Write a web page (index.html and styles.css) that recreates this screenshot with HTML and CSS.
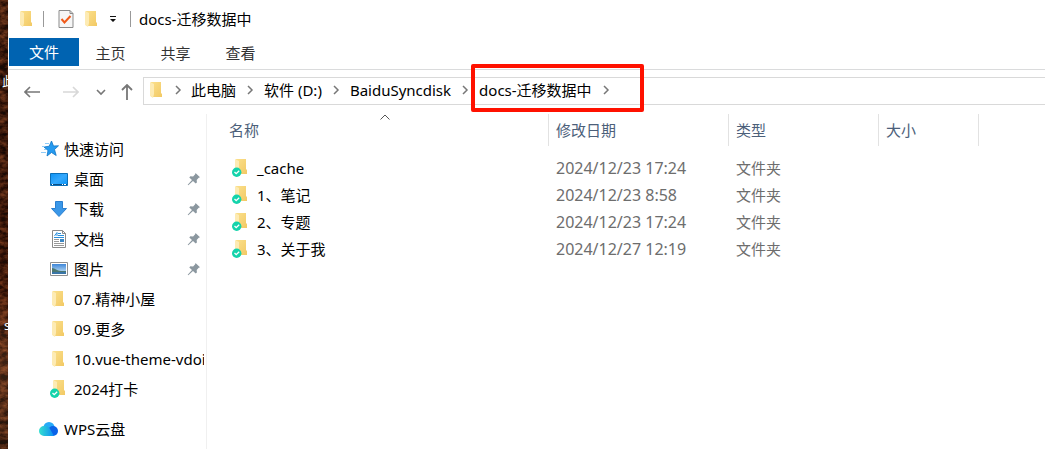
FILE: index.html
```html
<!DOCTYPE html>
<html lang="zh-CN">
<head>
  <meta charset="UTF-8" /><meta name="viewport" content="width=device-width, initial-scale=1"/>
  <title>docs-迁移数据中</title>
  <link rel="stylesheet" href="styles.css">
</head>
<body>
  <!-- Shared icons -->
  <svg class="sprite" aria-hidden="true">
    <defs>
      <linearGradient id="gFolder" x1="0" y1="0" x2="1" y2="1"><stop offset="0" stop-color="#fbe08c"/><stop offset="1" stop-color="#f2c964"/></linearGradient>
      <linearGradient id="gDesk" x1="0" y1="0" x2="1" y2="1"><stop offset="0" stop-color="#0d93f5"/><stop offset=".5" stop-color="#35a8fc"/><stop offset="1" stop-color="#0a95f8"/></linearGradient>
      <linearGradient id="gSky" x1="0" y1="0" x2="0" y2="1"><stop offset="0" stop-color="#3e86d8"/><stop offset="1" stop-color="#d3ecf8"/></linearGradient>
      <linearGradient id="gCloud" x1="0" y1="0" x2="1" y2="0"><stop offset="0" stop-color="#35e0cf"/><stop offset="1" stop-color="#0d8bf5"/></linearGradient>
    </defs>
    <symbol id="folder" viewBox="0 0 16 18">
      <path d="M3 1h10v11l1 1v3H3z" fill="url(#gFolder)"/>
      <path d="M2 1l4 2v10l-1 4-3-2z" fill="#fdebb4"/>
    </symbol>
    <symbol id="synced" viewBox="0 0 16 18">
      <path d="M4 0h10v10l1 1v4H4z" fill="url(#gFolder)"/>
      <path d="M3 0l4 2v12H3z" fill="#fdebb4"/>
      <circle cx="4.700" cy="13.200" r="4.700" fill="#14d3ab"/>
      <path d="M2.500 13l1.700 1.700 3-3" fill="none" stroke="#fff" stroke-width="1.300"/>
    </symbol>
    <symbol id="pin" viewBox="0 0 14 14">
      <path d="M8.500 1L13 5.300l-1.300.4-2 2.300.2 2.500-1.200 1L6 9 1.300 13.300.700 12.800 5 8 2.300 5.400l1-1.100 2.800.1L8.200 2.300z" fill="#8b979f"/>
    </symbol>
    <symbol id="chev" viewBox="0 0 8 10"><path d="M2 1l4 4-4 4" fill="none" stroke="#777" stroke-width="1.500"/></symbol>
  </svg>

  <aside class="desktop">
    <svg class="wallpaper" aria-hidden="true">
      <filter id="grain" x="0" y="0" width="100%" height="100%" color-interpolation-filters="sRGB">
        <feTurbulence type="fractalNoise" baseFrequency=".12 .2" numOctaves="4" seed="7"/>
        <feColorMatrix values="1.200 0 0 0 -.34  .7 0 0 0 -.24  .4 0 0 0 -.15  0 0 0 0 .6"/>
      </filter>
      <rect width="100%" height="100%" filter="url(#grain)"/>
    </svg>
    <span class="label label-pc">此</span>
    <span class="label label-s">s</span>
  </aside>

  <div class="window">
    <header class="titlebar">
      <svg class="folder"><use href="#folder"/></svg>
      <span class="sep"></span>
      <button class="tool" aria-label="属性">
        <svg width="16" height="18" viewBox="0 0 16 18"><path d="M1 .5h11l3 3v14H1z" fill="#f6f6f6" stroke="#8b8b8b"/><path d="M12 .5v3h3" fill="none" stroke="#8b8b8b"/><path d="M3.500 9l3 3.500 6-6.500" fill="none" stroke="#f05a1a" stroke-width="2"/></svg>
      </button>
      <button class="tool" aria-label="新建文件夹"><svg class="folder"><use href="#folder"/></svg></button>
      <button class="tool more" aria-label="自定义快速访问工具栏">
        <svg width="8" height="6" viewBox="0 0 8 6"><path d="M1 0h6v1H1zM1 3h6L4 6z" fill="#111"/></svg>
      </button>
      <span class="sep"></span>
      <h1>docs-迁移数据中</h1>
    </header>

    <nav class="tabs">
      <button class="active">文件</button>
      <button>主页</button>
      <button>共享</button>
      <button>查看</button>
    </nav>

    <div class="address">
      <div class="arrows">
        <button aria-label="后退"><svg width="16" height="12" viewBox="0 0 16 12"><path d="M6 1L1 6l5 5M1 6h15" fill="none" stroke="#777" stroke-width="1.600"/></svg></button>
        <button aria-label="前进"><svg width="16" height="12" viewBox="0 0 16 12"><path d="M10 1l5 5-5 5M15 6H0" fill="none" stroke="#d8d8d8" stroke-width="1.600"/></svg></button>
        <button aria-label="最近"><svg width="10" height="8" viewBox="0 0 10 8"><path d="M1 2l4 4 4-4" fill="none" stroke="#777" stroke-width="1.600"/></svg></button>
        <button aria-label="上移"><svg width="12" height="16" viewBox="0 0 12 16"><path d="M1 6l5-5 5 5M6 1v15" fill="none" stroke="#777" stroke-width="1.800"/></svg></button>
      </div>
      <div class="path">
        <svg class="folder"><use href="#folder"/></svg>
        <svg class="chev"><use href="#chev"/></svg>
        <a href="#">此电脑</a>
        <svg class="chev"><use href="#chev"/></svg>
        <a href="#">软件 (D:)</a>
        <svg class="chev"><use href="#chev"/></svg>
        <a href="#">BaiduSyncdisk</a>
        <svg class="chev"><use href="#chev"/></svg>
        <div class="current">
          <a href="#">docs-迁移数据中</a>
          <svg class="chev"><use href="#chev"/></svg>
        </div>
      </div>
    </div>

    <div class="content">
      <nav class="sidebar">
        <a class="root" href="#">
          <svg width="18" height="18" viewBox="0 0 18 18"><path d="M10.500 1l2 5 5-.2-4 3.700 1.700 6-4.700-3L6 16l1-5.500L3 7l5.200-.8z" fill="#259af0" stroke="#1276c4" stroke-width=".8"/><path d="M4 3.500h4M1 6.500h3M3 9.500h2M0 12.500h5" stroke="#8fcbf7"/></svg>
          快速访问
        </a>
        <a href="#">
          <svg width="18" height="18" viewBox="0 0 18 18"><path d="M.5 3.500h17v12H.5z" fill="url(#gDesk)" stroke="#0b6fb8"/><path d="M1 14.500h16" stroke="#0a4f86"/><path d="M2 14.500h1M12 14.500h1M14 14.500h2" stroke="#fff"/></svg>
          <span>桌面</span><svg class="pin"><use href="#pin"/></svg>
        </a>
        <a href="#">
          <svg width="18" height="18" viewBox="0 0 18 18"><path d="M5.500 1.500h7v7h4L9 16.500 1.500 8.500h4z" fill="#3a97e8" stroke="#2a7fd0"/></svg>
          <span>下载</span><svg class="pin"><use href="#pin"/></svg>
        </a>
        <a href="#">
          <svg width="18" height="18" viewBox="0 0 18 18"><path d="M2.500.5h10l3 3v14h-13z" fill="#fff" stroke="#8a8a8a"/><path d="M12.500.5v3h3" fill="none" stroke="#8a8a8a"/><path d="M4.500 6l2.500-3.500v3.500" fill="none" stroke="#2a8fdc"/><path d="M8 3.500h3M8 5.500h6M4 7.500h10" stroke="#2a8fdc"/><path d="M4 9.500h5M4 11.500h5M4 13.500h10M4 15.500h10" stroke="#999"/><path d="M10 9h4v3h-4z" fill="#3c87c4"/></svg>
          <span>文档</span><svg class="pin"><use href="#pin"/></svg>
        </a>
        <a href="#">
          <svg width="18" height="18" viewBox="0 0 18 18"><path d="M.5 2.500h17v13H.5z" fill="#fff" stroke="#8f8f8f"/><path d="M2 4h14v10H2z" fill="url(#gSky)"/><path d="M2 8c3 0 5 3 9 3h5v3H2z" fill="#4c7770"/><path d="M2 12h14v2H2z" fill="#3975a7"/></svg>
          <span>图片</span><svg class="pin"><use href="#pin"/></svg>
        </a>
        <a href="#"><svg class="folder"><use href="#folder"/></svg><span>07.精神小屋</span></a>
        <a href="#"><svg class="folder"><use href="#folder"/></svg><span>09.更多</span></a>
        <a href="#"><svg class="folder"><use href="#folder"/></svg><span>10.vue-theme-vdoing</span></a>
        <a href="#"><svg class="folder"><use href="#synced"/></svg><span>2024打卡</span></a>
        <a class="root cloud" href="#">
          <svg width="20" height="18" viewBox="0 0 20 18"><circle cx="10" cy="7.500" r="5.500" fill="#27aaf8"/><circle cx="14" cy="11" r="5" fill="#0a62e8"/><path d="M5 6c3-1 5 1 6 3l4 7H5A5 5 0 0 1 5 6z" fill="url(#gCloud)"/></svg>
          WPS云盘
        </a>
      </nav>

      <main>
        <table>
          <colgroup><col class="c-name"><col class="c-date"><col class="c-type"><col class="c-size"></colgroup>
          <thead>
            <tr>
              <th><button>名称<svg class="sort" width="10" height="6" viewBox="0 0 10 6"><path d="M.5 5.500L5 1l4.500 4.500" fill="none" stroke="#555"/></svg></button></th>
              <th><button>修改日期</button></th>
              <th><button>类型</button></th>
              <th><button>大小</button></th>
            </tr>
          </thead>
          <tbody>
            <tr><td><a href="#"><svg class="folder"><use href="#synced"/></svg>_cache</a></td><td class="date">2024/12/23 17:24</td><td>文件夹</td><td></td></tr>
            <tr><td><a href="#"><svg class="folder"><use href="#synced"/></svg>1、笔记</a></td><td class="date">2024/12/23 8:58</td><td>文件夹</td><td></td></tr>
            <tr><td><a href="#"><svg class="folder"><use href="#synced"/></svg>2、专题</a></td><td class="date">2024/12/23 17:24</td><td>文件夹</td><td></td></tr>
            <tr><td><a href="#"><svg class="folder"><use href="#synced"/></svg>3、关于我</a></td><td class="date">2024/12/27 12:19</td><td>文件夹</td><td></td></tr>
          </tbody>
        </table>
      </main>
    </div>
  </div>
</body>
</html>
```
FILE: styles.css
```css
* { box-sizing: border-box; margin: 0; padding: 0; }
body {
  font-family: 'Noto Sans', 'Noto Sans CJK SC', sans-serif;
  font-size: 15px;
  line-height: 20px;
  color: #000;
  display: flex;
  min-height: 100vh;
  overflow: hidden;
}
button {
  font: inherit;
  color: inherit;
  background: none;
  border: none;
}
a { color: inherit; text-decoration: none; }
svg { flex: none; display: block; }
.sprite { position: absolute; width: 0; height: 0; }
.folder { width: 16px; height: 18px; }
.chev { width: 8px; height: 10px; }

/* Desktop behind the window */
.desktop {
  position: relative;
  width: 8px;
  flex: none;
  overflow: hidden;
  background: linear-gradient(#43200f, #32150a 30%, #4c1d0a 65%, #8a5230 80%, #4a2c18);
}
.wallpaper { position: absolute; width: 100%; height: 100%; }
.label {
  position: absolute;
  color: #fff;
  font-size: 13px;
  text-shadow: 0 0 2px #000;
}
.label-pc { top: 71px; left: 2px; }
.label-s { top: 315px; left: 4px; }

.window {
  flex: 1;
  min-width: 0;
  display: flex;
  flex-direction: column;
  background: #fff;
  padding-left: 1px;
}

/* Title bar */
.titlebar {
  display: flex;
  align-items: center;
  height: 38px;
  padding-left: 9px;
}
.titlebar h1 { font-size: 15px; font-weight: normal; margin-left: 8px; }
.sep { width: 1px; height: 16px; background: #999; }
.titlebar .folder + .sep { margin-left: 9px; margin-right: 14px; }
.tool + .tool { margin-left: 9px; }
.tool + .more { margin-left: 10px; margin-right: 13px; }

/* Ribbon tabs */
.tabs {
  display: flex;
  height: 32px;
  padding-bottom: 3px;
  border-bottom: 1px solid #dadbdc;
  color: #333;
}
.tabs button { width: 65px; padding: 2px 2px 0 0; }
.tabs .active { width: 70px; padding: 0; background: #0063b1; color: #fff; }

/* Address bar */
.address {
  display: flex;
  height: 44px;
  padding-top: 7px;
}
.arrows {
  display: flex;
  align-items: center;
  width: 134px;
  height: 28px;
  padding: 2px 0 0 15px;
}
.arrows button { display: flex; }
.arrows button:nth-child(2) { margin-left: 23px; }
.arrows button:nth-child(3) { margin-left: 17px; }
.arrows button:nth-child(4) { margin-left: 15px; }
.path {
  flex: 1;
  display: flex;
  align-items: center;
  height: 28px;
  padding: 0 0 2px 4px;
  border: 1px solid #d9d9d9;
  border-right: none;
  white-space: nowrap;
}
.path .chev { margin: 0 10px; }
.path .folder + .chev { margin-right: 9px; }
.current {
  position: relative;
  display: flex;
  align-items: center;
}
.current::after {
  content: "";
  position: absolute;
  inset: -16px -24px -12px -8px;
  border: 4px solid #ff1100;
  border-radius: 2px;
}

.content { flex: 1; display: flex; }

/* Navigation pane */
.sidebar {
  width: 198px;
  flex: none;
  padding: 20px 2px 0 0;
  border-right: 1px solid #f0f0f0;
}
.sidebar a {
  display: flex;
  align-items: center;
  gap: 6px;
  height: 30px;
  padding-left: 41px;
  white-space: nowrap;
}
.sidebar a.root { padding-left: 32px; gap: 5px; }
.sidebar a.cloud { margin-top: 10px; padding-left: 30px; }
.sidebar .folder { margin-right: 2px; }
.sidebar span { flex: 1; min-width: 0; overflow: hidden; }
.sidebar .pin { width: 14px; height: 14px; margin-right: 3px; }

/* File list */
main { flex: 1; min-width: 0; padding-left: 15px; }
table { table-layout: fixed; width: 756px; border-collapse: separate; border-spacing: 0; }
.c-name { width: 327px; }
.c-date { width: 180px; }
.c-type { width: 150px; }
.c-size { width: 100px; }
th { font-weight: normal; border-right: 1px solid #e2e2e2; }
th button {
  position: relative;
  display: block;
  width: 100%;
  height: 32px;
  padding-left: 7px;
  text-align: left;
  color: #4c607a;
}
.sort { position: absolute; top: 0; left: 50%; margin-left: -5px; }
tbody::before { content: ""; display: table-row; height: 8px; }
td { height: 27px; padding-left: 7px; color: #6d6d6d; }
td a { display: flex; align-items: center; gap: 9px; padding-left: 3px; color: #000; }
.date { font-size: 16px; }
```
